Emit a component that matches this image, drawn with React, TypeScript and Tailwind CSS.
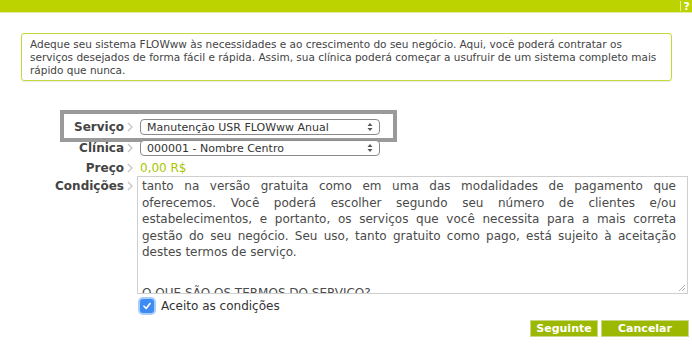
import React from "react";

const font = { fontFamily: '"DejaVu Sans", Verdana, sans-serif' };

const termos = [
    "tanto na versão gratuita como em uma das modalidades de pagamento que",
    "oferecemos. Você poderá escolher segundo seu número de clientes e/ou",
    "estabelecimentos, e portanto, os serviços que você necessita para a mais correta",
    "gestão do seu negócio. Seu uso, tanto gratuito como pago, está sujeito à aceitação",
];

function Chevron() {
    return (
        <svg width="8" height="10" viewBox="0 0 8 10" className="mx-[2px] shrink-0">
            <path d="M2 1 L6 5 L2 9" fill="none" stroke="#c4c4c4" strokeWidth="1.3" />
        </svg>
    );
}

function SelectBox({ value }: { value: string }) {
    return (
        <div className="relative ml-[3px] flex h-[16px] w-[240px] items-center rounded-[4px] border border-[#8a8a8a] bg-white pl-[6px] text-[11px] leading-none text-[#333]">
            <span>{value}</span>
            <svg width="6" height="10" viewBox="0 0 6 10" className="absolute right-[6px] top-[2px]">
                <path d="M0.5 4 L3 1 L5.5 4 Z M0.5 6 L3 9 L5.5 6 Z" fill="#555" />
            </svg>
        </div>
    );
}

function Label({ text }: { text: string }) {
    return (
        <div className="flex w-[87px] shrink-0 items-center justify-end pr-[1px]">
            <span className="text-[12px] font-bold leading-[16px] text-[#444]">{text}</span>
            <Chevron />
        </div>
    );
}

export default function App() {
    return (
        <div className="relative h-[357px] w-[692px] overflow-hidden bg-white" style={font}>
            {/* barra superior */}
            <div className="flex h-[12px] items-center justify-end bg-[#bcd300] pr-[2px] text-[11px] font-bold leading-none text-white">
                <span className="mr-[3px] h-[10px] w-px bg-[#e4ee9c]" />
                <span>?</span>
            </div>
            <div className="h-px bg-[#e2eca6]" />

            <div className="ml-[21px] mt-[20px] w-[651px] rounded-[3px] border border-[#c5da3a] px-[8px] pb-[3px] pt-[4px] text-[10.5px] leading-[13px] text-[#444] shadow-[0_1px_1px_rgba(0,0,0,0.08)]">
                Adeque seu sistema FLOWww às necessidades e ao crescimento do seu negócio. Aqui, você poderá contratar os
                serviços desejados de forma fácil e rápida. Assim, sua clínica poderá começar a usufruir de um sistema completo mais
                rápido que nunca.
            </div>

            <div className="relative ml-[50px] mt-[38px] flex flex-col">
                {/* destaque do campo serviço */}
                <div className="pointer-events-none absolute left-[10px] top-[-9px] h-[32px] w-[337px] border-[4px] border-[#9a9a9a]" />

                <div className="flex h-[16px] items-center">
                    <Label text="Serviço" />
                    <SelectBox value="Manutenção USR FLOWww Anual" />
                </div>
                <div className="mt-[5px] flex h-[16px] items-center">
                    <Label text="Clínica" />
                    <SelectBox value="000001 - Nombre Centro" />
                </div>
                <div className="mt-[4px] flex h-[16px] items-center">
                    <Label text="Preço" />
                    <span className="ml-[3px] text-[12px] leading-[16px] text-[#a9c600]">0,00 R$</span>
                </div>
                <div className="flex items-start">
                    <div className="pt-[2px]">
                        <Label text="Condições" />
                    </div>
                    <div className="relative h-[118px] w-[551px] overflow-hidden border border-[#cfcfcf] bg-white pl-[4px] pr-[11px] pt-[1px] text-[12px] leading-[16.5px] text-[#4a4a4a]">
                        {termos.map((line) => (
                            <div key={line} className="whitespace-nowrap text-justify [text-align-last:justify]">
                                {line}
                            </div>
                        ))}
                        <div>destes termos de serviço.</div>
                        {/* o texto continua abaixo, cortado pela área de rolagem */}
                        <div className="mt-[24px]">O QUE SÃO OS TERMOS DO SERVIÇO?</div>
                        <svg width="8" height="8" viewBox="0 0 8 8" className="absolute bottom-[1px] right-[1px]">
                            <path d="M7 1 L1 7 M7 4 L4 7" stroke="#999" strokeWidth="0.8" />
                        </svg>
                    </div>
                </div>
                <div className="ml-[90px] mt-[5px] flex h-[14px] items-center gap-[7px]">
                    <span className="flex h-[14px] w-[14px] items-center justify-center rounded-[3px] bg-[#3c8cf3] shadow-[0_0_0_2px_#a9cdfb]">
                        <svg width="10" height="10" viewBox="0 0 10 10">
                            <path d="M2 5.2 L4.2 7.5 L8 2.5" fill="none" stroke="white" strokeWidth="1.6" strokeLinecap="round" strokeLinejoin="round" />
                        </svg>
                    </span>
                    <span className="text-[12px] text-[#333]">Aceito as condições</span>
                </div>
            </div>

            <div className="mr-[3px] mt-[7px] flex justify-end gap-[3px]">
                <button className="h-[17px] w-[68px] border border-[#c9d98a] bg-[#9cb800] text-[11px] font-bold leading-none text-white">
                    Seguinte
                </button>
                <button className="h-[17px] w-[88px] border border-[#c9d98a] bg-[#9cb800] text-[11px] font-bold leading-none text-white">
                    Cancelar
                </button>
            </div>
        </div>
    );
}
